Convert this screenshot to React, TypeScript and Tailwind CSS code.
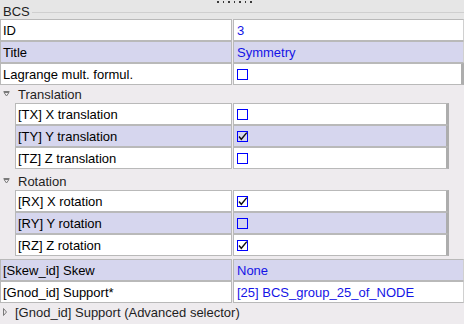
import React from 'react';

const FONT = "font-['Liberation_Sans',Arial,sans-serif]";

type RowData = {
  label: string;
  value?: string;
  check?: boolean;
  alt?: boolean;
};

const TOP_ROWS: RowData[] = [
  { label: 'ID', value: '3' },
  { label: 'Title', value: 'Symmetry', alt: true },
  { label: 'Lagrange mult. formul.', check: false },
];

const TRANSLATION: RowData[] = [
  { label: '[TX] X translation', check: false },
  { label: '[TY] Y translation', check: true, alt: true },
  { label: '[TZ] Z translation', check: false },
];

const ROTATION: RowData[] = [
  { label: '[RX] X rotation', check: true },
  { label: '[RY] Y rotation', check: false, alt: true },
  { label: '[RZ] Z rotation', check: true },
];

const BOTTOM_ROWS: RowData[] = [
  { label: '[Skew_id] Skew', value: 'None', alt: true },
  { label: '[Gnod_id] Support*', value: '[25] BCS_group_25_of_NODE' },
];

const CheckBox = ({ checked }: { checked: boolean }) => (
  <div className="relative w-[11px] h-[11px] border border-[#0000ff] bg-white/0">
    {checked && (
      <svg className="absolute -left-px -top-px overflow-visible" width="11" height="11" viewBox="0 0 11 11">
        <path d="M2 5.5 L4.3 8.3 L9.8 1.6" fill="none" stroke="#111" strokeWidth="1.4" />
      </svg>
    )}
  </div>
);

const Row = ({ row, nested }: { row: RowData; nested?: boolean }) => {
  const bg = row.alt ? 'bg-[#d6d6ee]' : 'bg-white';
  const isCheck = row.check !== undefined;
  return (
    <div className="flex h-[22px]">
      <div
        className={`${nested ? 'w-[217px]' : 'w-[232px]'} ${bg} shrink-0 flex items-center pl-[2px] border border-[#b9b9b9] text-black whitespace-nowrap overflow-hidden`}
      >
        {row.label}
      </div>
      <div
        className={`ml-px flex-1 ${bg} flex items-center pl-[3px] border border-[#b9b9b9] ${isCheck ? 'border-r-[3px] border-r-[#adadad]' : 'border-r-[#d0d0d0]'} text-[#1414e6] whitespace-nowrap overflow-hidden`}
      >
        {isCheck ? <CheckBox checked={!!row.check} /> : row.value}
      </div>
    </div>
  );
};

const GroupHeader = ({ title, open }: { title: string; open: boolean }) => (
  <div className="flex items-center h-[18px] text-[#1e1e1e]">
    {open ? (
      <svg className="ml-[3px] mr-[8px]" width="7" height="6" viewBox="0 0 7 6">
        <path d="M0.5 0.5 H6.5 M1 1.5 L3.5 5 L6 1.5 Z" fill="none" stroke="#7a7a7a" strokeWidth="1" />
      </svg>
    ) : (
      <svg className="ml-[3px] mr-[8px]" width="4" height="8" viewBox="0 0 4 8">
        <path d="M0.5 0.5 L3.5 4 L0.5 7.5 Z" fill="none" stroke="#7a7a7a" strokeWidth="1" />
      </svg>
    )}
    <span>{title}</span>
  </div>
);

export default function App() {
  return (
    <div className={`w-[464px] h-[324px] overflow-hidden bg-[#eeebee] text-[13px] leading-none ${FONT}`}>
      {/* ── BCS legend ─────────────────────────────────────────── */}
      <div className="bg-[#e6e6e6]">
        <div className="flex gap-[4px] ml-[217px] pt-px h-[4px]">
          {[0, 1, 2, 3, 4, 5, 6].map(i => (
            <div key={i} className="w-[1.5px] h-[2px] bg-[#3a3a3a]" />
          ))}
        </div>
        <div className="flex items-center h-[15px]">
          <span className="pl-[3px] pr-[2px] text-[#222]">BCS</span>
          <div className="flex-1 h-px bg-[#cfcfcf] mt-px" />
        </div>
      </div>

      {TOP_ROWS.map(r => <Row key={r.label} row={r} />)}

      {/* ── Translation ──────────────────────────────────────── */}
      <div className="mb-[3px]">
        <GroupHeader title="Translation" open />
        <div className="px-[15px]">
          {TRANSLATION.map(r => <Row key={r.label} row={r} nested />)}
        </div>
      </div>

      {/* ── Rotation ─────────────────────────────────────────── */}
      <div className="mb-[3px]">
        <GroupHeader title="Rotation" open />
        <div className="px-[15px]">
          {ROTATION.map(r => <Row key={r.label} row={r} nested />)}
        </div>
      </div>

      {BOTTOM_ROWS.map(r => <Row key={r.label} row={r} />)}

      <GroupHeader title="[Gnod_id] Support (Advanced selector)" open={false} />
    </div>
  );
}
